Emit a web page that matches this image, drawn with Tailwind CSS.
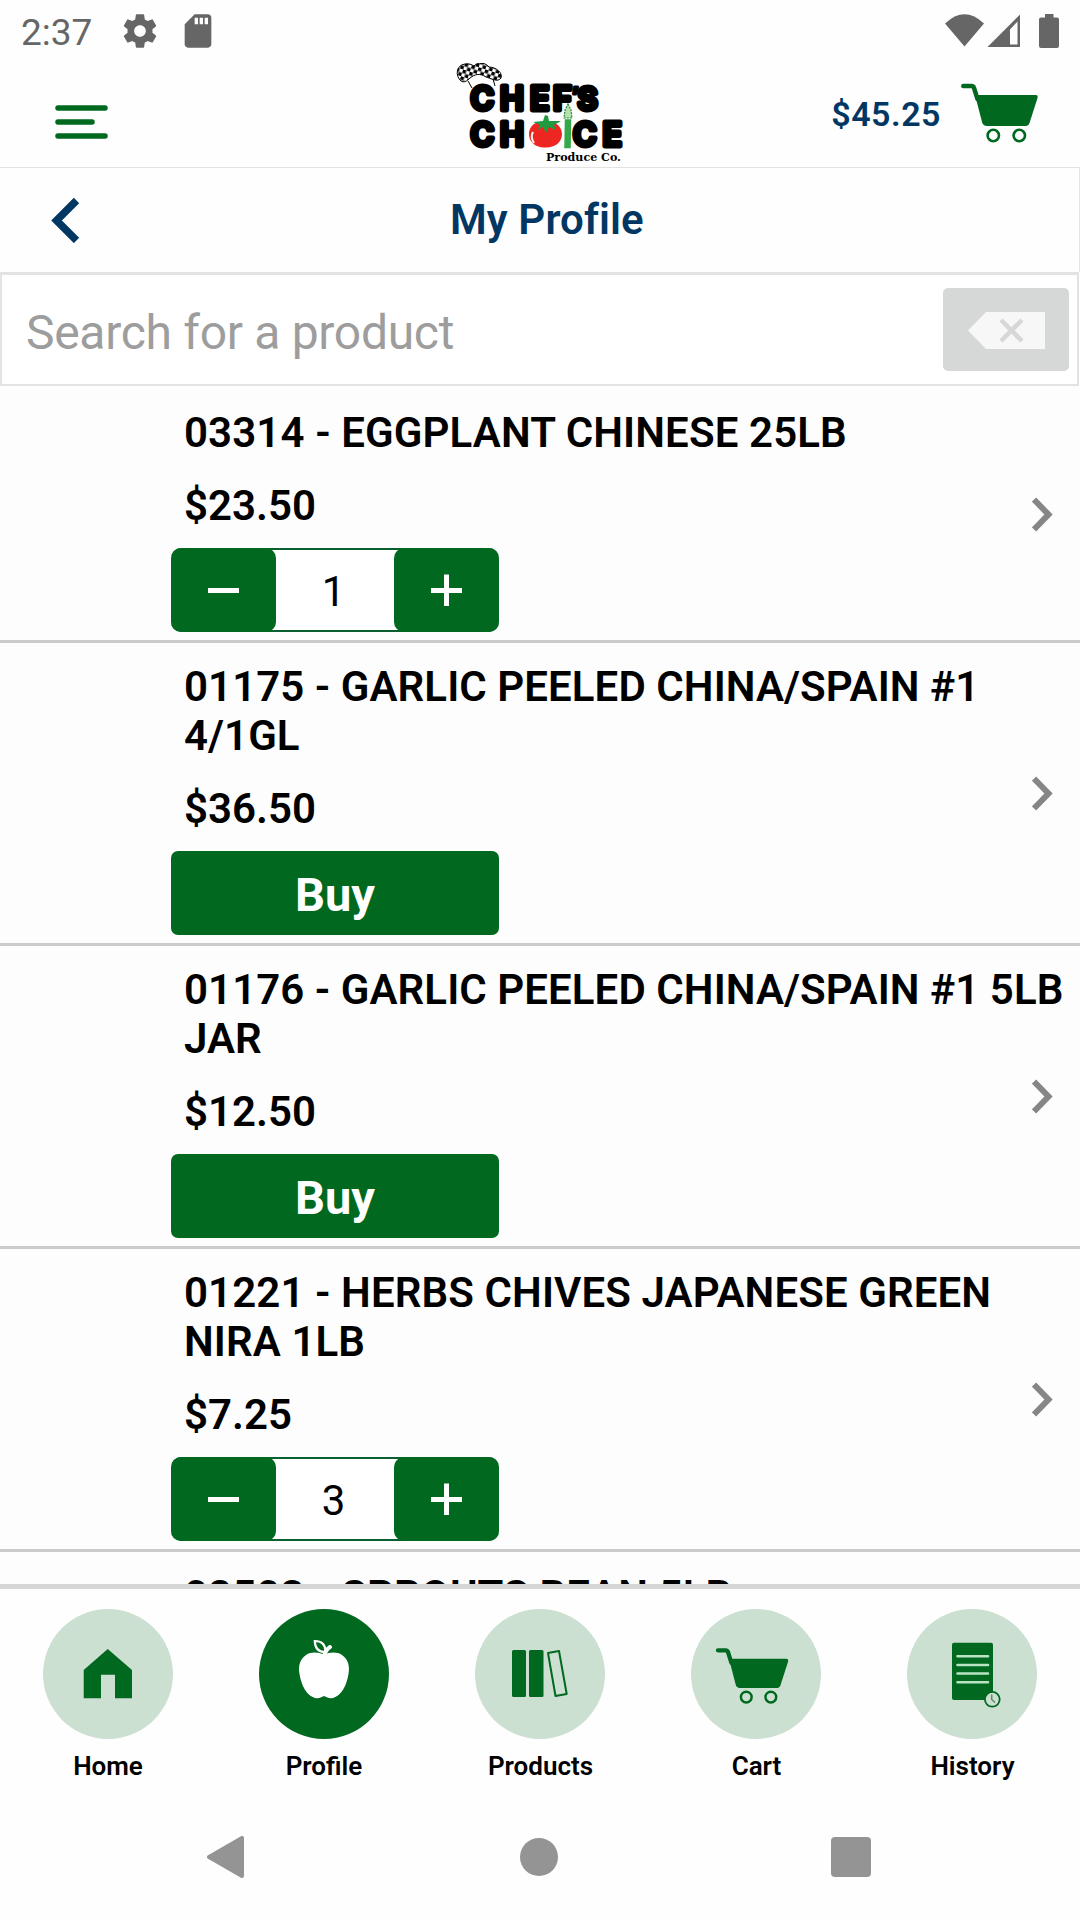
<!DOCTYPE html>
<html lang="en">

<head>
  <meta charset="UTF-8">
  <meta name="viewport" content="width=device-width, initial-scale=1.0">
  <title>My Profile</title>
  <script src="https://cdn.jsdelivr.net/npm/@tailwindcss/browser@4"></script>
</head>

<body class="bg-[#fefefe]">
  <!-- shared icons -->
  <svg class="hidden">
    <symbol id="cart" viewBox="0 0 80 62">
      <path d="M3.3 4H11.5Q13.5 4 14 6L17.5 17" fill="none" stroke="#016820" stroke-width="4.5" stroke-linecap="round" />
      <path d="M15 13H76Q78.300 13.300 77.500 16L69.500 41Q68.500 44 65.500 44H27Q23.500 44 22.300 41Z" fill="#016820" />
      <circle cx="33.300" cy="53.500" r="5.700" fill="none" stroke="#016820" stroke-width="2.600" />
      <circle cx="59.300" cy="53.500" r="5.700" fill="none" stroke="#016820" stroke-width="2.600" />
    </symbol>
    <symbol id="next" viewBox="0 0 21 35">
      <path d="M2 2.500L16.500 17.500L2 32.500" fill="none" stroke="#868686" stroke-width="6" />
    </symbol>
    <symbol id="minus" viewBox="0 0 32 32">
      <path d="M0 16.500H31" stroke="#fff" stroke-width="5" />
    </symbol>
    <symbol id="plus" viewBox="0 0 32 32">
      <path d="M1 16.500H32M16.500 0.500V32" stroke="#fff" stroke-width="5" />
    </symbol>
  </svg>

  <div class="w-[1080px] h-[1920px] flex flex-col overflow-hidden font-[Roboto,sans-serif] text-black">

    <!-- status bar -->
    <div class="h-[63px] shrink-0 flex items-start text-[#666]">
      <div class="w-[99px] ml-[21px] mt-[11px] text-[37px] leading-[44px]">2:37</div>
      <svg class="w-10 h-10 mt-[11px]" viewBox="0 0 24 24" fill="currentColor">
        <path d="M19.430 12.980c.040-.320.070-.640.070-.980s-.030-.660-.070-.980l2.110-1.650c.190-.150.240-.420.120-.640l-2-3.460c-.120-.220-.390-.300-.610-.220l-2.490 1c-.520-.400-1.080-.730-1.690-.980l-.380-2.650C14.460 2.180 14.250 2 14 2h-4c-.250 0-.460.180-.490.420l-.380 2.650c-.610.250-1.170.590-1.690.980l-2.490-1c-.230-.090-.490 0-.610.220l-2 3.460c-.130.220-.070.490.120.640l2.110 1.650c-.040.320-.070.650-.070.980s.030.660.070.980l-2.110 1.650c-.190.150-.240.420-.120.640l2 3.460c.120.220.390.300.610.220l2.490-1c.520.400 1.080.730 1.690.980l.380 2.650c.030.240.240.420.490.420h4c.250 0 .460-.180.490-.420l.380-2.650c.610-.250 1.170-.590 1.690-.980l2.490 1c.230.090.490 0 .610-.220l2-3.460c.120-.220.070-.490-.120-.640l-2.110-1.650zM12 15.500c-1.930 0-3.500-1.570-3.500-3.500s1.570-3.500 3.500-3.500 3.500 1.570 3.500 3.500-1.570 3.500-3.500 3.500z" />
      </svg>
      <svg class="w-10 h-10 mt-[11px] ml-[18px]" viewBox="0 0 24 24" fill="currentColor">
        <path d="M18 2h-8L4.020 8 4 20c0 1.100.9 2 2 2h12c1.100 0 2-.9 2-2V4c0-1.100-.9-2-2-2zm-6 6h-2V4h2v4zm3 0h-2V4h2v4zm3 0h-2V4h2v4z" />
      </svg>
      <svg class="w-[116px] h-9 mt-[13px] ml-auto mr-5" viewBox="0 0 116 36" fill="currentColor">
        <path d="M1 10.500Q20.500-8 40 10.500L20.500 33.500Z" />
        <path d="M43.500 34L76 1.500V34ZM66 31.500H73.500V8.500L66 16.500Z" fill-rule="evenodd" />
        <path d="M101 1H109.500V4.500H113Q115 4.500 115 6.500V33Q115 35 113 35H97Q95 35 95 33V6.500Q95 4.500 97 4.500H101Z" />
      </svg>
    </div>

    <!-- header -->
    <div class="h-[105px] shrink-0 flex items-start border-b border-[#e3e3e3]">
      <svg class="w-[54px] h-[36px] ml-[55px] mt-[41px]" viewBox="0 0 54 36" stroke="#016820" stroke-width="5.500" stroke-linecap="round">
        <path d="M3 4H50M3 18H37M3 32H50" />
      </svg>

      <svg class="w-[180px] h-[104px] ml-[341px]" viewBox="450 63 180 104">
        <defs>
          <pattern id="check" width="7" height="7" patternUnits="userSpaceOnUse" patternTransform="rotate(18)">
            <rect width="7" height="7" fill="#fff" />
            <path d="M0 0H3.500V3.500H0ZM3.500 3.500H7V7H3.500Z" fill="#000" />
          </pattern>
        </defs>
        <path d="M468 81L472 88M493 79L495 86" stroke="#000" stroke-width="1" />
        <path d="M461 81C455 76 456 65 465 64C469 63 472 65 474 66C478 61 486 63 489 67C496 67 503 73 501 78C498 83 490 78 486 77C480 73 475 74 470 78C467 81 464 83 461 81Z" fill="url(#check)" stroke="#000" stroke-width="1" />
        <g font-family="Inter, sans-serif" font-weight="600" font-size="32" stroke="#000" stroke-width="5" stroke-linejoin="round">
          <text y="109.500 109.500 109.500 109.500 105 109.500" x="470.500 500 530 553 571.500 577.500">CHEF<tspan font-size="24" stroke-width="3">’</tspan><tspan font-size="31" textLength="17">S</tspan></text>
          <text y="145.500" x="470.500 500">CH</text>
          <text y="145.500" x="573 602.500">CE</text>
        </g>
        <path d="M545 124C537 119 529 126 529 134C529 143 537 148 545 147.500C554 148 562 143 562 134C562 126 553 119 545 124Z" fill="#ee2622" />
        <path d="M533 132Q530 137 534 143" fill="none" stroke="#fff" stroke-width="2" />
        <path d="M533 122L543 121L545 115L548 116L549 121L561 121L554 125L556 130L549 127L546 133L543 127L538 130L540 125Z" fill="#1f9a3e" />
        <path d="M565.500 120H570.500L570 147.500H565Z" fill="#35a849" stroke="#35a849" stroke-width="1.500" />
        <path d="M568 104L571 110L572 118H564L565 110Z" fill="#b7dfb0" stroke="#1f8a34" stroke-width="1.200" stroke-dasharray="2 1" />
        <text x="546" y="160.500" font-family="DejaVu Serif, serif" font-weight="700" font-size="11" textLength="75" lengthAdjust="spacingAndGlyphs">Produce Co.</text>
      </svg>

      <div class="ml-auto mt-[31px] mr-[19px] text-[34px] leading-[40px] font-semibold tracking-[0.5px] text-[#023764]">$45.25</div>
      <svg class="w-20 h-[62px] mt-[19px] mr-10">
        <use href="#cart" />
      </svg>
    </div>

    <!-- page title -->
    <div class="h-[104px] shrink-0 flex items-start border-r border-[#e3e3e3]">
      <svg class="w-[29px] h-[46px] ml-[51px] mt-[29px]" viewBox="0 0 29 46">
        <path d="M25.500 3.500L5.500 23.500L25.500 43.500" fill="none" stroke="#023764" stroke-width="7.500" />
      </svg>
      <h1 class="ml-[370px] mt-[27px] text-[42px] leading-[49px] font-semibold tracking-[0.1px] text-[#023764]">My Profile</h1>
    </div>

    <!-- search -->
    <div class="w-[1079px] h-[114px] shrink-0 flex items-start border-2 border-t-[3px] border-[#e3e3e3] bg-white">
      <div class="ml-[24px] mt-[30px] text-[48px] leading-[56px] tracking-[-0.3px] text-[#9d9d9d]">Search for a product</div>
      <div class="w-[126px] h-[83px] ml-auto mt-[13px] mr-2 rounded-[5px] bg-[#d6d8d7]">
        <svg class="w-[126px] h-[83px]" viewBox="0 0 126 83">
          <path d="M25 42.500L43 24H102V61H43Z" fill="#f7f7f7" />
          <path d="M58 32L79 53M79 32L58 53" stroke="#d6d8d7" stroke-width="4.500" />
        </svg>
      </div>
    </div>

    <!-- product list -->
    <div class="h-[1198px] shrink-0 pt-[3px] overflow-hidden bg-[#fdfdfd] text-[42px] leading-[49px] font-semibold">

      <div class="flex items-center border-b-[3px] border-[#cbcbcb] pt-[19px] pb-2 pl-[171px]">
        <div class="w-[861px]">
          <div class="w-[896px] pl-[13px] tracking-[0.12px]">03314 - EGGPLANT CHINESE 25LB</div>
          <div class="pl-[13px] mt-6">$23.50</div>
          <div class="w-[328px] h-[84px] mt-[18px] flex items-center justify-between rounded-[10px] bg-white border-y-2 border-[#0a5f30] font-normal">
            <div class="w-[105px] h-[84px] rounded-[10px] bg-[#016820] flex items-center justify-center"><svg class="w-8 h-8"><use href="#minus" /></svg></div>
            <span class="mr-[3px] pt-0.5">1</span>
            <div class="w-[105px] h-[84px] rounded-[10px] bg-[#016820] flex items-center justify-center"><svg class="w-8 h-8"><use href="#plus" /></svg></div>
          </div>
        </div>
        <svg class="w-[21px] h-[35px] -mt-[11px]"><use href="#next" /></svg>
      </div>

      <div class="flex items-center border-b-[3px] border-[#cbcbcb] pt-[19px] pb-2 pl-[171px]">
        <div class="w-[861px]">
          <div class="w-[896px] pl-[13px] tracking-[0.07px]">01175 - GARLIC PEELED CHINA/SPAIN #1<br>4/1GL</div>
          <div class="pl-[13px] mt-6">$36.50</div>
          <div class="w-[328px] h-[84px] mt-[18px] rounded-[7px] bg-[#016820] text-white text-[47px] leading-[87px] font-bold text-center">Buy</div>
        </div>
        <svg class="w-[21px] h-[35px] -mt-[11px]"><use href="#next" /></svg>
      </div>

      <div class="flex items-center border-b-[3px] border-[#cbcbcb] pt-[19px] pb-2 pl-[171px]">
        <div class="w-[861px]">
          <div class="w-[896px] pl-[13px] tracking-[0.07px]">01176 - GARLIC PEELED CHINA/SPAIN #1 5LB<br>JAR</div>
          <div class="pl-[13px] mt-6">$12.50</div>
          <div class="w-[328px] h-[84px] mt-[18px] rounded-[7px] bg-[#016820] text-white text-[47px] leading-[87px] font-bold text-center">Buy</div>
        </div>
        <svg class="w-[21px] h-[35px] -mt-[11px]"><use href="#next" /></svg>
      </div>

      <div class="flex items-center border-b-[3px] border-[#cbcbcb] pt-[19px] pb-2 pl-[171px]">
        <div class="w-[861px]">
          <div class="w-[896px] pl-[13px] tracking-[0.1px]">01221 - HERBS CHIVES JAPANESE GREEN<br>NIRA 1LB</div>
          <div class="pl-[13px] mt-6">$7.25</div>
          <div class="w-[328px] h-[84px] mt-[18px] flex items-center justify-between rounded-[10px] bg-white border-y-2 border-[#0a5f30] font-normal">
            <div class="w-[105px] h-[84px] rounded-[10px] bg-[#016820] flex items-center justify-center"><svg class="w-8 h-8"><use href="#minus" /></svg></div>
            <span class="mr-[3px] pt-0.5">3</span>
            <div class="w-[105px] h-[84px] rounded-[10px] bg-[#016820] flex items-center justify-center"><svg class="w-8 h-8"><use href="#plus" /></svg></div>
          </div>
        </div>
        <svg class="w-[21px] h-[35px] -mt-[11px]"><use href="#next" /></svg>
      </div>

      <div class="pt-[19px] pl-[184px] tracking-[0.12px]">02503 - SPROUTS BEAN 5LB</div>
    </div>

    <!-- tab bar -->
    <div class="h-[216px] shrink-0 grid grid-cols-5 justify-items-center border-t-[5px] border-[#d6d6d6] pt-5 text-[26px] leading-[30px] font-semibold">
      <div class="flex flex-col items-center gap-3">
        <svg class="w-[130px] h-[130px] rounded-full bg-[#cce0d2]" viewBox="0 0 130 130">
          <path d="M64.700 40L89 61V89.300H72V65.700H58V89.300H40.700V61Z" fill="#016820" />
        </svg>
        <span>Home</span>
      </div>
      <div class="flex flex-col items-center gap-3">
        <svg class="w-[130px] h-[130px] rounded-full bg-[#016820]" viewBox="0 0 130 130">
          <path d="M65 45.500C59 43 52 42.500 47 46C41 50 39 57 40.500 65C42 76 48 87 56 89C60 90 62 88 65 87C68 88 70 90 74 89C82 87 88 76 89.500 65C91 57 89 50 83 46C78 42.500 71 43 65 45.500Z" fill="#fff" />
          <path d="M65.500 46Q66.500 41 71 38" fill="none" stroke="#fff" stroke-width="4" stroke-linecap="round" />
          <path d="M66 43Q56 43 55.800 32Q66 32 66.500 42" fill="none" stroke="#fff" stroke-width="2.200" />
        </svg>
        <span>Profile</span>
      </div>
      <div class="flex flex-col items-center gap-3">
        <svg class="w-[130px] h-[130px] rounded-full bg-[#cce0d2]" viewBox="0 0 130 130" fill="#016820">
          <rect x="37" y="41" width="14" height="47" rx="1.500" />
          <rect x="54" y="41" width="14.500" height="47" rx="1.500" />
          <path d="M73 44L84 42L91.700 85L80.500 87Z" fill="none" stroke="#016820" stroke-width="2" stroke-linejoin="round" />
        </svg>
        <span class="pl-px">Products</span>
      </div>
      <div class="flex flex-col items-center gap-3">
        <svg class="w-[130px] h-[130px] rounded-full bg-[#cce0d2]" viewBox="0 0 130 130">
          <use href="#cart" x="23.800" y="37.500" width="75.600" height="58.600" />
        </svg>
        <span class="pl-px">Cart</span>
      </div>
      <div class="flex flex-col items-center gap-3">
        <svg class="w-[130px] h-[130px] rounded-full bg-[#cce0d2]" viewBox="0 0 130 130">
          <rect x="45" y="33.700" width="41" height="57.300" rx="2" fill="#016820" />
          <path d="M50.500 47.300H81M50.500 56H81M50.500 64.500H81M50.500 73.300H81" stroke="#b9e3c2" stroke-width="2.600" stroke-linecap="round" />
          <circle cx="85.300" cy="90.300" r="7.400" fill="#cce0d2" stroke="#016820" stroke-width="1.800" />
          <path d="M84.700 85.500V90.500L88 93.500" fill="none" stroke="#5b8a6a" stroke-width="1.500" />
        </svg>
        <span class="pl-px">History</span>
      </div>
    </div>

    <!-- system navigation -->
    <div class="h-[114px] shrink-0 flex items-center justify-between pl-[206px] pr-[209px]">
      <svg class="w-[39px] h-[42px]" viewBox="0 0 39 42">
        <path d="M3 21L36 2V40Z" fill="#949494" stroke="#949494" stroke-width="4" stroke-linejoin="round" />
      </svg>
      <div class="size-[38px] ml-[2px] rounded-full bg-[#949494]"></div>
      <div class="size-10 rounded-[4px] bg-[#949494]"></div>
    </div>
  </div>
</body>

</html>
